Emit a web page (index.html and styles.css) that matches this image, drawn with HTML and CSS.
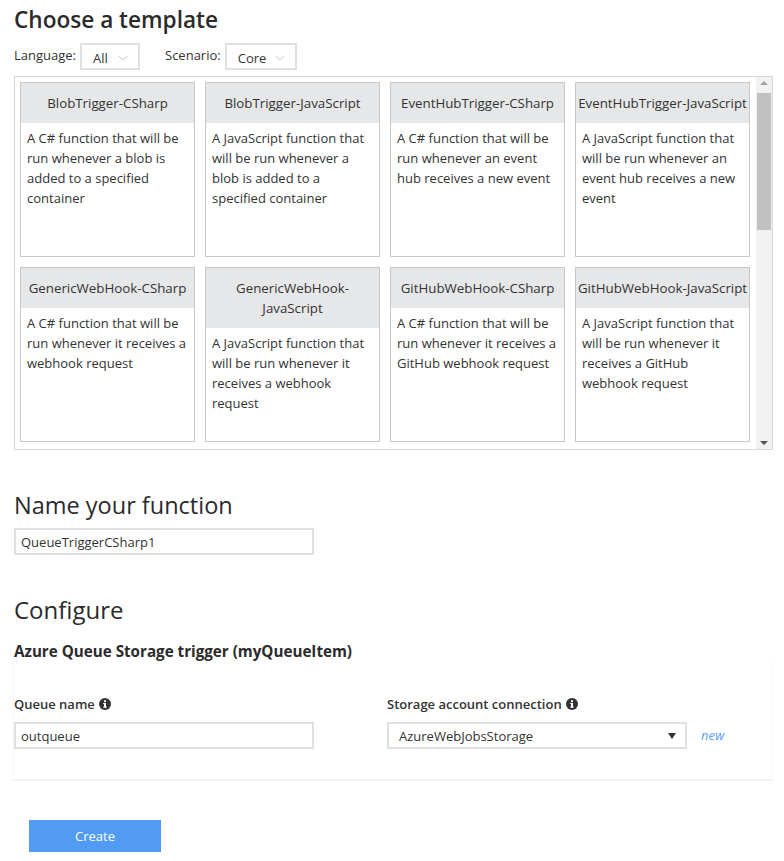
FILE: index.html
```html
<!DOCTYPE html>
<html>
<head>
<meta charset="utf-8">
<link rel="stylesheet" href="styles.css">
</head>
<body>
<div class="page">
  <h1 class="title">Choose a template</h1>
  <div class="filters">
    <span class="filter-label">Language:</span>
    <div class="dropdown dd-lang"><span>All</span><svg class="chev" width="10" height="6" viewBox="0 0 10 6"><polyline points="1,1 5,5 9,1" fill="none" stroke="#c8c8c8" stroke-width="1"/></svg></div>
    <span class="filter-label lbl-scen">Scenario:</span>
    <div class="dropdown dd-scen"><span>Core</span><svg class="chev" width="10" height="6" viewBox="0 0 10 6"><polyline points="1,1 5,5 9,1" fill="none" stroke="#c8c8c8" stroke-width="1"/></svg></div>
  </div>

  <div class="templates">
    <div class="grid">
      <div class="card"><div class="card-head">BlobTrigger-CSharp</div><div class="card-body">A C# function that will be run whenever a blob is added to a specified container</div></div>
      <div class="card"><div class="card-head">BlobTrigger-JavaScript</div><div class="card-body">A JavaScript function that will be run whenever a blob is added to a specified container</div></div>
      <div class="card"><div class="card-head">EventHubTrigger-CSharp</div><div class="card-body">A C# function that will be run whenever an event hub receives a new event</div></div>
      <div class="card"><div class="card-head">EventHubTrigger-JavaScript</div><div class="card-body">A JavaScript function that will be run whenever an event hub receives a new event</div></div>
      <div class="card"><div class="card-head">GenericWebHook-CSharp</div><div class="card-body">A C# function that will be run whenever it receives a webhook request</div></div>
      <div class="card"><div class="card-head">GenericWebHook-<br>JavaScript</div><div class="card-body">A JavaScript function that will be run whenever it receives a webhook request</div></div>
      <div class="card"><div class="card-head">GitHubWebHook-CSharp</div><div class="card-body">A C# function that will be run whenever it receives a GitHub webhook request</div></div>
      <div class="card"><div class="card-head">GitHubWebHook-JavaScript</div><div class="card-body">A JavaScript function that will be run whenever it receives a GitHub webhook request</div></div>
    </div>
    <div class="scrollbar">
      <svg class="sb-arrow" width="16" height="12" viewBox="0 0 16 12"><polygon points="4,8 12,8 8,4" fill="#a3a3a3"/></svg>
      <div class="sb-thumb"></div>
      <div class="sb-fill"></div>
      <svg class="sb-arrow" width="16" height="12" viewBox="0 0 16 12"><polygon points="4,4 12,4 8,8" fill="#505050"/></svg>
    </div>
  </div>

  <h2 class="heading name-heading">Name your function</h2>
  <input class="text-input" type="text" value="QueueTriggerCSharp1">

  <h2 class="heading configure-heading">Configure</h2>
  <div class="binding-title">Azure Queue Storage trigger (myQueueItem)</div>

  <div class="config-panel">
    <div class="field">
      <div class="field-label">Queue name <svg class="info" width="12" height="12" viewBox="0 0 12 12"><circle cx="6" cy="6" r="6" fill="#333"/><rect x="5" y="5" width="2" height="4.5" fill="#fff"/><rect x="4.2" y="8.6" width="3.6" height="1" fill="#fff"/><rect x="4.2" y="5" width="1.5" height="1" fill="#fff"/><circle cx="6" cy="3.2" r="1.1" fill="#fff"/></svg></div>
      <input class="text-input" type="text" value="outqueue">
    </div>
    <div class="field">
      <div class="field-label">Storage account connection <svg class="info" width="12" height="12" viewBox="0 0 12 12"><circle cx="6" cy="6" r="6" fill="#333"/><rect x="5" y="5" width="2" height="4.5" fill="#fff"/><rect x="4.2" y="8.6" width="3.6" height="1" fill="#fff"/><rect x="4.2" y="5" width="1.5" height="1" fill="#fff"/><circle cx="6" cy="3.2" r="1.1" fill="#fff"/></svg></div>
      <div class="select-row">
        <div class="select"><span>AzureWebJobsStorage</span><svg width="8" height="6" viewBox="0 0 8 6"><polygon points="0,0 8,0 4,6" fill="#333"/></svg></div>
        <a class="new-link">new</a>
      </div>
    </div>
  </div>

  <button class="create-btn">Create</button>
</div>
</body>
</html>
```

FILE: styles.css
```css
* { box-sizing: border-box; }
html, body { margin: 0; padding: 0; background: #fff; }
body {
  font-family: "Open Sans", "Noto Sans", sans-serif;
  font-size: 13px;
  color: #333;
}
.page {
  width: 759px;
  margin-left: 14px;
}
.title {
  margin: 4px 0 0;
  font-size: 22.6px;
  line-height: 32px;
  font-weight: 600;
  color: #2b2b2b;
}
.filters {
  margin-top: 7px;
  display: flex;
  align-items: flex-start;
  height: 27px;
}
.filter-label {
  line-height: 24px;
  margin-right: 4px;
}
.lbl-scen { margin-left: 25px; }
.dropdown {
  height: 27px;
  border: 2px solid #e0e0e0;
  display: flex;
  align-items: center;
  justify-content: space-between;
  padding: 2px 10px 0 11px;
  line-height: 20px;
}
.dd-lang { width: 60px; }
.dd-scen { width: 72px; }

.templates {
  margin-top: 6px;
  height: 374px;
  border: 1px solid #d6d6d6;
  display: flex;
}
.grid {
  flex: 1;
  padding: 5px 0 0 5px;
  display: grid;
  grid-template-columns: repeat(4, 175px);
  grid-auto-rows: 175px;
  gap: 10px;
  overflow: hidden;
}
.card {
  border: 1px solid #c8c8c8;
  background: #fff;
}
.card-head {
  background: #e6e7e8;
  text-align: center;
  padding: 10px 1px;
  font-size: 13.3px;
  line-height: 20px;
  color: #333;
  white-space: nowrap;
}
.card-body {
  padding: 5px 6px;
  line-height: 20px;
  color: #333;
}
.scrollbar {
  width: 16px;
  background: #f1f1f1;
  display: flex;
  flex-direction: column;
}
.sb-arrow { display: block; flex: none; }
.sb-thumb {
  height: 137px;
  margin: 4px 1px 0;
  background: #c1c1c1;
}
.sb-fill { flex: 1; }

.heading {
  margin: 0;
  line-height: 32px;
  font-weight: 400;
  color: #2b2b2b;
}
.name-heading { margin-top: 39px; font-size: 23.5px; font-weight: 500; }
.configure-heading { margin-top: 39px; font-size: 24px; }
.text-input {
  display: block;
  margin-top: 7px;
  width: 300px;
  height: 27px;
  border: 2px solid #e0e0e0;
  padding: 0 5px;
  font-family: inherit;
  font-size: 13px;
  color: #333;
  outline: none;
}
.binding-title {
  margin-top: 15px;
  font-size: 15.2px;
  line-height: 20px;
  font-weight: 700;
  color: #2b2b2b;
}
.config-panel {
  margin-left: -1px;
  width: 760px;
  border: 1px solid #f7f7f7;
  border-top: none;
  border-bottom: 2px solid #f2f2f2;
  padding: 33px 0 30px 0;
  display: grid;
  grid-template-columns: 373px 1fr;
}
.field-label {
  line-height: 20px;
  font-weight: 600;
  display: flex;
  align-items: center;
  gap: 4px;
}
.field .text-input { margin-top: 8px; }
.select-row {
  margin-top: 8px;
  display: flex;
  align-items: center;
}
.select {
  width: 300px;
  height: 27px;
  border: 2px solid #e0e0e0;
  display: flex;
  align-items: center;
  justify-content: space-between;
  padding: 0 9px 0 10px;
  line-height: 20px;
}
.new-link {
  margin-left: 14px;
  margin-top: -2px;
  color: #5a9ff5;
  font-style: italic;
}
.create-btn {
  display: block;
  margin: 39px 0 0 15px;
  width: 132px;
  height: 32px;
  border: none;
  background: #519bf4;
  color: #fff;
  font-family: inherit;
  font-size: 13px;
}
```
